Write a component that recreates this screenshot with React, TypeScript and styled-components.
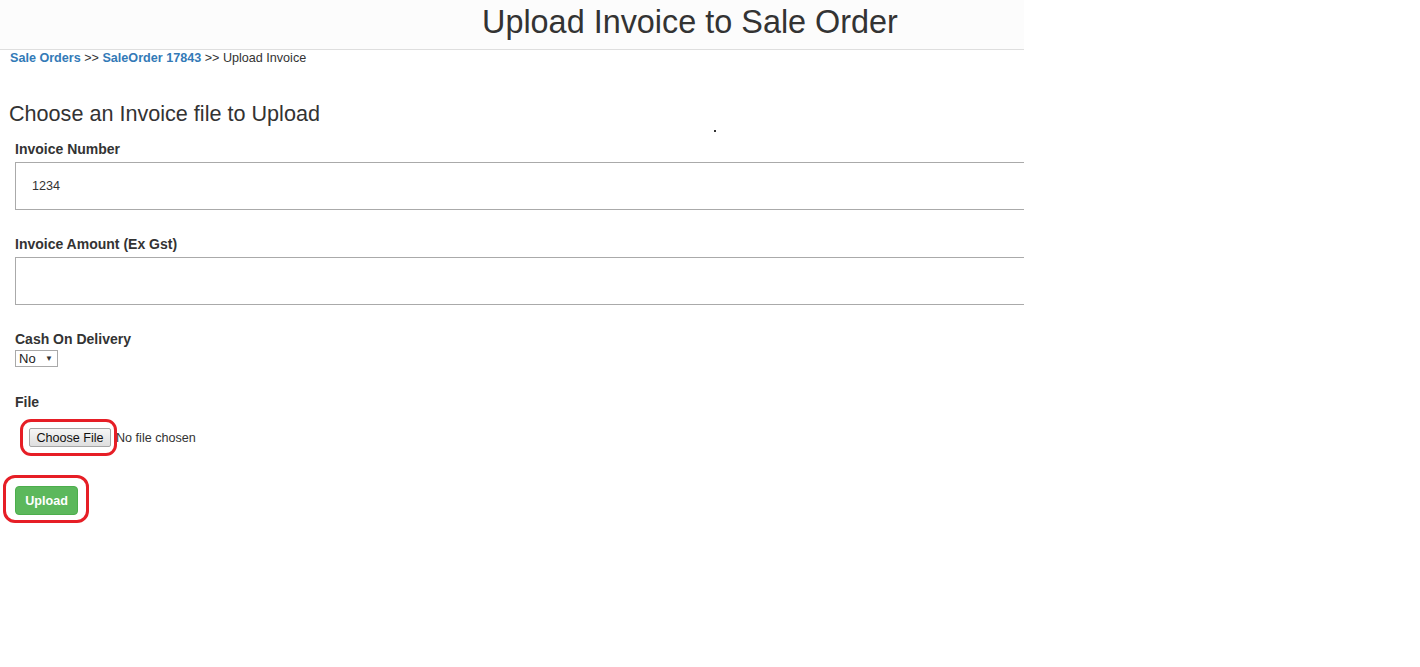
import styled, { createGlobalStyle } from "styled-components"

const Global = createGlobalStyle`
    body {
        margin: 0;
        background: #fff;
        font-family: "Liberation Sans", Arial, sans-serif;
        color: #333;
    }
`

const Page = styled.div`
    width: 1024px;
    overflow: hidden;
    position: relative;
    min-height: 667px;
`

const Header = styled.div`
    height: 49px;
    background-color: #fcfcfc;
    border-bottom: 1px solid #dedede;
    display: flex;
    align-items: center;
    padding-left: 482px;
`

const Title = styled.h1`
    margin: 0;
    margin-top: -4px;
    font-size: 32.4px;
    font-weight: normal;
    color: #333;
`

const Crumbs = styled.div`
    padding: 0 10px;
    font-size: 12.6px;
    line-height: 16px;
    color: #333;
`

const Crumb = styled.a`
    color: #337ab7;
    font-weight: bold;
    text-decoration: none;
`

const Heading = styled.h3`
    margin: 35px 0 0 9px;
    font-size: 21.6px;
    font-weight: normal;
    color: #333;
    line-height: 26px;
`

const Form = styled.div`
    padding: 0 15px;
    display: flex;
    flex-direction: column;
`

const Group = styled.div<{ $gap?: number }>`
    display: flex;
    flex-direction: column;
    margin-top: ${p => p.$gap ?? 0}px;
`

const Label = styled.label`
    font-size: 14px;
    font-weight: bold;
    line-height: 16px;
    color: #333;
    margin-bottom: 5px;
`

const TextBox = styled.input`
    width: 1100px;
    height: 48px;
    box-sizing: border-box;
    border: 1px solid #aaa;
    padding: 0 16px;
    font-family: "Liberation Sans", Arial, sans-serif;
    font-size: 12.6px;
    color: #333;
    outline: none;
`

const SelectBox = styled.div`
    width: 43px;
    height: 17px;
    box-sizing: border-box;
    border: 1px solid #a9a9a9;
    display: flex;
    align-items: center;
    justify-content: space-between;
    padding: 0 4px 0 3px;
    font-size: 13px;
    color: #222;
    margin-top: -2px;
`

const Arrow = styled.span`
    font-size: 8px;
    color: #333;
`

const FileRow = styled.div`
    position: relative;
    display: flex;
    align-items: center;
    margin-top: 13px;
    padding-left: 14px;
    height: 19px;
`

const FileButton = styled.button`
    height: 19px;
    width: 82px;
    box-sizing: border-box;
    padding: 0;
    border: 1px solid #a6a6a6;
    border-radius: 2px;
    background: linear-gradient(#f6f6f6, #dedede);
    font-family: "Liberation Sans", Arial, sans-serif;
    font-size: 12.6px;
    color: #111;
`

const FileText = styled.span`
    font-size: 12.6px;
    color: #333;
    margin-left: 5px;
`

const Ring = styled.div<{ $l: number; $t: number; $w: number; $h: number; $r: number }>`
    position: absolute;
    left: ${p => p.$l}px;
    top: ${p => p.$t}px;
    width: ${p => p.$w}px;
    height: ${p => p.$h}px;
    box-sizing: border-box;
    border: 3px solid #e61e26;
    border-radius: ${p => p.$r}px;
    pointer-events: none;
`

const UploadWrap = styled.div`
    position: relative;
    margin-top: 39px;
`

const UploadButton = styled.button`
    width: 63px;
    height: 29px;
    border: 1px solid #4cae4c;
    border-radius: 4px;
    background-color: #5cb85c;
    color: #fff;
    font-family: "Liberation Sans", Arial, sans-serif;
    font-size: 12.6px;
    font-weight: bold;
    padding: 0;
`

const Dot = styled.div`
    position: absolute;
    left: 714px;
    top: 130px;
    width: 2px;
    height: 2px;
    background: #333;
`

export default function App() {
    return <Page>
        <Global />
        <Header>
            <Title>Upload Invoice to Sale Order</Title>
        </Header>
        <Crumbs>
            <Crumb href="#">Sale Orders</Crumb> &gt;&gt; <Crumb href="#">SaleOrder 17843</Crumb> &gt;&gt; Upload Invoice
        </Crumbs>
        <Heading>Choose an Invoice file to Upload</Heading>
        <Dot />
        <Form>
            <Group $gap={14}>
                <Label>Invoice Number</Label>
                <TextBox defaultValue="1234" />
            </Group>
            <Group $gap={26}>
                <Label>Invoice Amount (Ex Gst)</Label>
                <TextBox />
            </Group>
            <Group $gap={26}>
                <Label>Cash On Delivery</Label>
                <SelectBox>No <Arrow>▼</Arrow></SelectBox>
            </Group>
            <Group $gap={27}>
                <Label>File</Label>
                <FileRow>
                    <FileButton>Choose File</FileButton>
                    <FileText>No file chosen</FileText>
                    <Ring $l={5} $t={-9} $w={97} $h={37} $r={11} />
                </FileRow>
            </Group>
            <UploadWrap>
                <UploadButton>Upload</UploadButton>
                <Ring $l={-12} $t={-11} $w={86} $h={48} $r={12} />
            </UploadWrap>
        </Form>
    </Page>
}
